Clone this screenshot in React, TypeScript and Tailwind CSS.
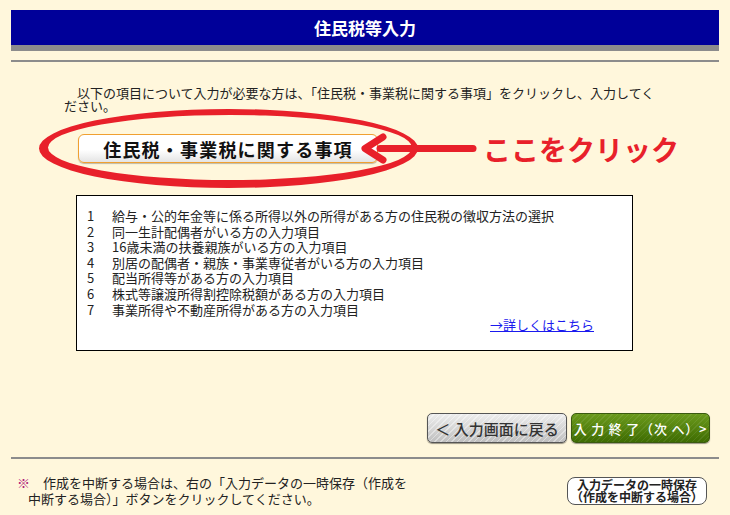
import React from 'react';

const items = [
  '給与・公的年金等に係る所得以外の所得がある方の住民税の徴収方法の選択',
  '同一生計配偶者がいる方の入力項目',
  '16歳未満の扶養親族がいる方の入力項目',
  '別居の配偶者・親族・事業専従者がいる方の入力項目',
  '配当所得等がある方の入力項目',
  '株式等譲渡所得割控除税額がある方の入力項目',
  '事業所得や不動産所得がある方の入力項目',
];

function Overlay() {
  // red ellipse + arrow drawn over the button
  return (
    <svg className="absolute left-0 top-0 pointer-events-none" width="730" height="515" viewBox="0 0 730 515">
      <path
        fillRule="evenodd"
        fill="#e8202a"
        d="M39,148.5 a189.5,39.5 0 1,0 379,0 a189.5,39.5 0 1,0 -379,0 Z M48,147.5 a182,32.5 0 1,0 364,0 a182,32.5 0 1,0 -364,0 Z"
      />
      <line x1="380" y1="148.5" x2="473" y2="148.5" stroke="#e8202a" strokeWidth="7" strokeLinecap="round" />
      <polyline points="383,137 365,148.5 383,160" fill="none" stroke="#e8202a" strokeWidth="7" strokeLinecap="round" strokeLinejoin="round" />
    </svg>
  );
}

export default function App() {
  return (
    <div className="relative w-[730px] h-[515px] overflow-hidden bg-[#fff7dc] text-[#222] font-['Noto_Sans_CJK_JP','Liberation_Sans',sans-serif]">
      <div className="px-[11px] pt-[10px]">
        <div className="h-[35px] bg-[#000099] flex items-center justify-center text-white font-bold text-[17px] leading-none">
          住民税等入力
        </div>
        <div className="h-[6px] bg-[#8c8c8c]" />
        <div className="mt-[9px] h-[2px] bg-[#8c8c8c]" />
      </div>

      <p className="ml-[64px] mt-[24px] w-[600px] text-[13px] leading-[13px] indent-[13px]">
        以下の項目について入力が必要な方は、「住民税・事業税に関する事項」をクリックし、入力してください。
      </p>

      <div className="flex items-center mt-[22px]">
        <button className="ml-[78px] w-[300px] h-[29px] rounded-[6px] border-[1.5px] border-[#f0a030] bg-[linear-gradient(to_bottom,#ffffff_55%,#e4e4e4)] shadow-[0_1px_1px_rgba(0,0,0,0.25)] flex items-center justify-center text-[18px] leading-none font-bold tracking-[1.2px] text-[#111]">
          住民税・事業税に関する事項
        </button>
        <span className="ml-[105px] text-[28px] leading-none font-bold text-[#e8202a]">ここをクリック</span>
      </div>

      <div className="ml-[76px] mt-[32px] w-[557px] h-[156px] border border-black bg-white pt-[12px] pl-[10px] pr-[38px] text-[13px] leading-[15.6px]">
        {items.map((t, i) => (
          <div key={i} className="flex">
            <span className="w-[25px] shrink-0">{i + 1}</span>
            <span>{t}</span>
          </div>
        ))}
        <div className="flex justify-end">
          <a href="#" className="text-[#1a1aee] underline">→詳しくはこちら</a>
        </div>
      </div>

      <div className="flex justify-end gap-[4px] pr-[20px] mt-[62px]">
        <button className="w-[140px] h-[30px] rounded-[5px] border border-[#555] bg-[image:repeating-linear-gradient(135deg,rgba(255,255,255,0.4)_0px,rgba(255,255,255,0.4)_1px,transparent_1px,transparent_4px),linear-gradient(to_bottom,#ededed,#bfbfbf)] shadow-[0_1px_1px_rgba(0,0,0,0.4)] flex items-center justify-center whitespace-nowrap text-[15px] leading-none text-[#333] font-medium">
          ＜ 入力画面に戻る
        </button>
        <button className="w-[139px] h-[30px] rounded-[5px] border border-[#3a5a10] bg-[image:repeating-linear-gradient(135deg,rgba(255,255,255,0.08)_0px,rgba(255,255,255,0.08)_1px,transparent_1px,transparent_4px),linear-gradient(to_bottom,#6b9a1c,#3e6c02)] shadow-[0_1px_1px_rgba(0,0,0,0.4)] flex items-center justify-center whitespace-nowrap text-[13px] leading-none text-white font-medium tracking-[0.8px]">
          入 力 終 了（次 へ）&gt;
        </button>
      </div>

      <div className="mx-[11px] mt-[14px] h-[2px] bg-[#8c8c8c]" />

      <div className="flex justify-between mt-[16px] pr-[23px]">
        <p className="ml-[17px] w-[395px] pl-[11px] -indent-[11px] text-[13px] leading-[16px]">
          <span className="text-[#b0207a]">※</span>　作成を中断する場合は、右の「入力データの一時保存（作成を中断する場合）」ボタンをクリックしてください。
        </p>
        <button className="mt-[2px] w-[140px] h-[28px] rounded-[8px] border-[1.5px] border-[#555] bg-white flex flex-col items-center justify-center whitespace-nowrap text-[12px] leading-[12.5px] font-bold text-[#222]">
          <span>入力データの一時保存</span>
          <span>（作成を中断する場合）</span>
        </button>
      </div>

      <Overlay />
    </div>
  );
}
